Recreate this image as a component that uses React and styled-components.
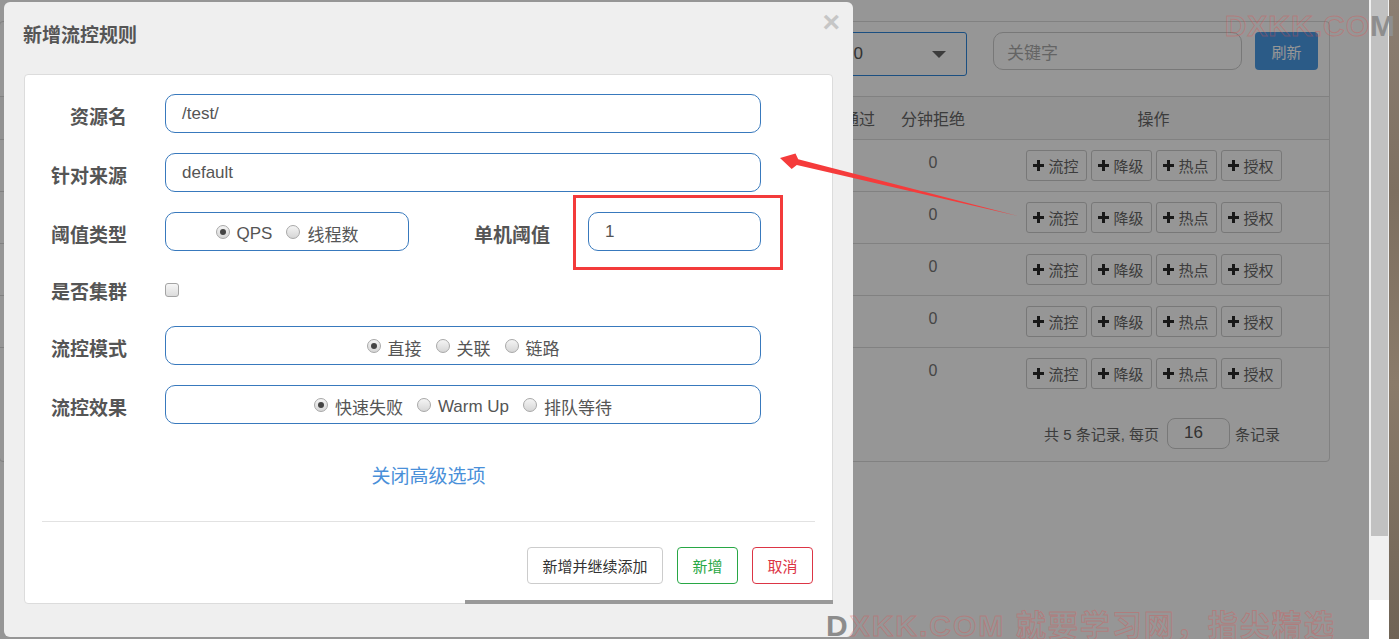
import React from 'react';
import styled, { createGlobalStyle } from 'styled-components';

const Global = createGlobalStyle`
  html, body {
    margin: 0;
    padding: 0;
    overflow: hidden;
    background: #fff;
  }
  * { box-sizing: border-box; }
  body {
    font-family: "Liberation Sans", "Noto Sans CJK SC", sans-serif;
    color: #555;
  }
`;

const Screen = styled.div`
  position: relative;
  display: flex;
  width: 1399px;
  height: 639px;
  overflow: hidden;
`;

const Viewport = styled.div`
  position: relative;
  width: 1369px;
  height: 639px;
  overflow: hidden;
  background: #fff;
`;

const Scrollbar = styled.div`
  width: 20px;
  height: 600px;
  background: #f0f0f0;
  padding: 0 1px 0 2px;
`;

const Thumb = styled.div`
  height: 536px;
  background: #c1c1c1;
`;

const Wallpaper = styled.div`
  width: 10px;
  height: 639px;
  background: linear-gradient(180deg, #8c7f73 0%, #7d6f60 30%, #8a7b6a 60%, #6f6355 100%);
`;

/* ---------- background page ---------- */

const Panel = styled.div`
  margin: 21px 0 0 -1px;
  width: 1331px;
  border: 1px solid #dcdcdc;
  border-radius: 4px;
  padding-bottom: 12px;
`;

const Toolbar = styled.div`
  display: flex;
  justify-content: flex-end;
  align-items: flex-start;
  padding: 10px 11px 20px 0;
`;

const Select = styled.div`
  width: 146px;
  height: 44px;
  border: 1px solid #2f86dc;
  border-radius: 3px;
  display: flex;
  align-items: center;
  justify-content: space-between;
  padding: 0 20px 0 22px;
  font-size: 17px;
  color: #555;
  margin-right: 26px;
`;

const Caret = styled.span`
  width: 0;
  height: 0;
  border-left: 7px solid transparent;
  border-right: 7px solid transparent;
  border-top: 7px solid #666;
`;

const Search = styled.div`
  width: 249px;
  height: 38px;
  border: 1px solid #ccc;
  border-radius: 10px;
  display: flex;
  align-items: center;
  padding-left: 13px;
  font-size: 17px;
  color: #aaa;
  margin-right: 13px;
`;

const PrimaryButton = styled.div`
  width: 63px;
  height: 38px;
  border-radius: 4px;
  background: #4a9be6;
  color: #fff;
  font-size: 15px;
  display: flex;
  align-items: center;
  justify-content: center;
`;

const TableRow = styled.div`
  display: grid;
  grid-template-columns: 414px 96px 96px 96px 96px 90px 90px 1fr;
  height: ${({ $header }) => ($header ? '44px' : '52px')};
  border-top: ${({ $header }) => ($header ? '1px solid #dcdcdc' : 'none')};
  border-bottom: ${({ $last }) => ($last ? 'none' : '1px solid #dcdcdc')};
  background: ${({ $header }) => ($header ? '#f8f8f8' : 'transparent')};
  font-size: 16px;
  color: #666;
`;

const HeadCell = styled.div`
  display: flex;
  align-items: center;
  justify-content: center;
`;

const Cell = styled.div`
  text-align: center;
  padding-top: 12px;
  line-height: 22px;
  color: #777;
  white-space: nowrap;
  overflow: hidden;
`;

const Ops = styled.div`
  display: flex;
  justify-content: center;
  gap: 4px;
  padding-top: 10px;
`;

const OpButton = styled.div`
  width: 61px;
  height: 31px;
  border: 1px solid #ccc;
  border-radius: 3px;
  background: #fff;
  display: flex;
  align-items: center;
  justify-content: center;
  gap: 4px;
  font-size: 15px;
  color: #666;
`;

const PlusIcon = () => (
  <svg width="11" height="11" viewBox="0 0 11 11">
    <path d="M4 0h3v4h4v3H7v4H4V7H0V4h4z" fill="#2a2a2a" />
  </svg>
);

const Pager = styled.div`
  display: flex;
  justify-content: flex-end;
  align-items: center;
  height: 32px;
  margin-top: 17px;
  padding-right: 49px;
  font-size: 15px;
  color: #666;
`;

const PageSize = styled.div`
  width: 63px;
  height: 31px;
  border: 1px solid #ccc;
  border-radius: 8px;
  margin: 0 5px 0 8px;
  padding-left: 16px;
  display: flex;
  align-items: center;
  font-size: 17px;
  color: #555;
`;

const Backdrop = styled.div`
  position: absolute;
  inset: 0;
  background: rgba(0, 0, 0, 0.412);
`;

/* ---------- modal ---------- */

const Modal = styled.div`
  position: absolute;
  left: 4px;
  top: 2px;
  width: 849px;
  height: 635px;
  background: #efefef;
  border-radius: 6px;
`;

const ModalHeader = styled.div`
  display: flex;
  justify-content: space-between;
  align-items: flex-start;
  padding: 20px 13px 0 19px;
  height: 72px;
`;

const ModalTitle = styled.h4`
  margin: 0;
  font-size: 19px;
  line-height: 27px;
  font-weight: bold;
  color: #555;
`;

const Close = styled.span`
  margin-top: -15px;
  font-size: 30px;
  line-height: 30px;
  font-weight: bold;
  color: #c6c6c6;
  font-family: "Liberation Sans", sans-serif;
`;

const Card = styled.div`
  position: relative;
  margin: 0 20px;
  height: 530px;
  background: #fff;
  border: 1px solid #dcdcdc;
  border-radius: 4px;
  padding-top: 19px;
`;

const Row = styled.div`
  display: flex;
  align-items: center;
  height: ${({ $h }) => $h || 39}px;
  margin-bottom: 20px;
`;

const Label = styled.label`
  width: ${({ $w }) => $w || 102}px;
  margin-right: 38px;
  padding-top: 4px;
  text-align: right;
  font-size: 19px;
  font-weight: bold;
  color: #555;
  white-space: nowrap;
`;

const Input = styled.div`
  width: ${({ $w }) => $w || 596}px;
  height: 39px;
  border: 1px solid #3879bd;
  border-radius: 10px;
  display: flex;
  align-items: center;
  justify-content: ${({ $center }) => ($center ? 'center' : 'flex-start')};
  padding-left: ${({ $center }) => ($center ? 0 : 16)}px;
  font-size: 17px;
  color: #555;
`;

const Option = styled.span`
  display: inline-flex;
  align-items: center;
  margin: 4px 7px 0;
  font-size: 17px;
  color: #555;
`;

const Radio = styled.span`
  position: relative;
  width: 14px;
  height: 14px;
  margin: -3px 7px 0 0;
  border-radius: 50%;
  border: 1px solid #a8a8a8;
  background: linear-gradient(180deg, #f4f4f4 0%, #d6d6d6 100%);

  &::after {
    content: '';
    display: ${({ $checked }) => ($checked ? 'block' : 'none')};
    position: absolute;
    left: 3px;
    top: 3px;
    width: 6px;
    height: 6px;
    border-radius: 50%;
    background: #444;
  }
`;

const Checkbox = styled.span`
  width: 14px;
  height: 14px;
  margin-top: 3px;
  border: 1px solid #a4a4a4;
  border-radius: 3px;
  background: linear-gradient(180deg, #f6f6f6 0%, #dcdcdc 100%);
`;

const Annotated = styled.div`
  position: relative;
`;

const RedBox = styled.div`
  position: absolute;
  left: -15px;
  top: -17px;
  width: 210px;
  height: 75px;
  border: 3px solid #f33b3b;
`;

const Toggle = styled.div`
  margin-top: 29px;
  height: 42px;
  display: flex;
  align-items: center;
  justify-content: center;
  font-size: 19px;
  color: #4a90d9;
`;

const Divider = styled.div`
  margin: 26px 17px 0;
  height: 1px;
  background: #e2e2e2;
`;

const Footer = styled.div`
  display: flex;
  justify-content: flex-end;
  gap: 14px;
  padding: 25px 19px 0 0;
`;

const Button = styled.div`
  height: 37px;
  padding: 0 14.5px;
  border: 1px solid ${({ $color }) => $color || '#ccc'};
  border-radius: 4px;
  background: #fff;
  display: flex;
  align-items: center;
  font-size: 15px;
  color: ${({ $color }) => $color || '#333'};
`;

const HScroll = styled.div`
  position: absolute;
  right: -1px;
  bottom: -1px;
  width: 368px;
  height: 4px;
  background: #999;
`;

const ArrowLayer = styled.svg`
  position: absolute;
  left: 0;
  top: 0;
  pointer-events: none;
`;

const WatermarkTop = styled.div`
  position: absolute;
  right: 3px;
  top: 9px;
  font-size: 30px;
  font-weight: bold;
  letter-spacing: 1px;
  color: transparent;
  -webkit-text-stroke: 1px rgba(225, 80, 80, 0.35);
  font-family: "Liberation Sans", sans-serif;
  white-space: nowrap;

  span { color: #8e8e8e; -webkit-text-stroke: 0; }
`;

const WatermarkBottom = styled.div`
  position: absolute;
  left: 826px;
  bottom: -6px;
  font-size: 30px;
  font-weight: bold;
  letter-spacing: 2px;
  color: transparent;
  -webkit-text-stroke: 1px rgba(225, 80, 80, 0.35);
  font-family: "Liberation Sans", "Noto Sans CJK SC", sans-serif;
  white-space: nowrap;

  span { color: #8c8c8c; -webkit-text-stroke: 0; }
`;

const ops = ['流控', '降级', '热点', '授权'];
const rows = [
  { name: '/test/', stats: [0, 0, 0, 0, 0, 0] },
  { name: 'sentinel_default_context', stats: [0, 0, 0, 0, 0, 0] },
  { name: '/hello', stats: [0, 0, 0, 0, 0, 0] },
  { name: '/demo', stats: [0, 0, 0, 0, 0, 0] },
  { name: 'sentinel_spring_web_context', stats: [0, 0, 0, 0, 0, 0] },
];

function Background() {
  return (
    <Panel>
      <Toolbar>
        <Select>
          10
          <Caret />
        </Select>
        <Search>关键字</Search>
        <PrimaryButton>刷新</PrimaryButton>
      </Toolbar>
      <TableRow $header>
        {['资源名', '通过QPS', '拒绝QPS', '并发数', '平均RT', '分钟通过', '分钟拒绝', '操作'].map((h) => (
          <HeadCell key={h}>{h}</HeadCell>
        ))}
      </TableRow>
      {rows.map((r, i) => (
        <TableRow key={i} $last={i === rows.length - 1}>
          <Cell>{r.name}</Cell>
          {r.stats.map((v, j) => (
            <Cell key={j}>{v}</Cell>
          ))}
          <Ops>
            {ops.map((o) => (
              <OpButton key={o}>
                <PlusIcon />
                {o}
              </OpButton>
            ))}
          </Ops>
        </TableRow>
      ))}
      <Pager>
        共 5 条记录, 每页
        <PageSize>16</PageSize>
        条记录
      </Pager>
    </Panel>
  );
}

function Choice({ checked, children }) {
  return (
    <Option>
      <Radio $checked={checked} />
      {children}
    </Option>
  );
}

function RuleDialog() {
  return (
    <Modal>
      <ModalHeader>
        <ModalTitle>新增流控规则</ModalTitle>
        <Close>×</Close>
      </ModalHeader>
      <Card>
        <Row>
          <Label>资源名</Label>
          <Input>/test/</Input>
        </Row>
        <Row>
          <Label>针对来源</Label>
          <Input>default</Input>
        </Row>
        <Row>
          <Label>阈值类型</Label>
          <Input $w={244} $center>
            <Choice checked>QPS</Choice>
            <Choice>线程数</Choice>
          </Input>
          <Label $w={141}>单机阈值</Label>
          <Annotated>
            <Input $w={173}>1</Input>
            <RedBox />
          </Annotated>
        </Row>
        <Row $h={35}>
          <Label>是否集群</Label>
          <Checkbox />
        </Row>
        <Row>
          <Label>流控模式</Label>
          <Input $center>
            <Choice checked>直接</Choice>
            <Choice>关联</Choice>
            <Choice>链路</Choice>
          </Input>
        </Row>
        <Row>
          <Label>流控效果</Label>
          <Input $center>
            <Choice checked>快速失败</Choice>
            <Choice>Warm Up</Choice>
            <Choice>排队等待</Choice>
          </Input>
        </Row>
        <Toggle>关闭高级选项</Toggle>
        <Divider />
        <Footer>
          <Button>新增并继续添加</Button>
          <Button $color="#28a745">新增</Button>
          <Button $color="#dc3545">取消</Button>
        </Footer>
        <HScroll />
      </Card>
    </Modal>
  );
}

export default function App() {
  return (
    <>
      <Global />
      <Screen>
        <Viewport>
          <Background />
          <Backdrop />
          <RuleDialog />
          <ArrowLayer width="1369" height="639" viewBox="0 0 1369 639">
            <polygon
              points="780,158 795.5,153.5 798.2,159.3 1022,217 796.8,165.1 791.7,169.1"
              fill="#f53b3b"
            />
          </ArrowLayer>
        </Viewport>
        <Scrollbar>
          <Thumb />
        </Scrollbar>
        <Wallpaper />
        <WatermarkTop>
          DXKK.CO<span>M</span>
        </WatermarkTop>
        <WatermarkBottom>
          <span>D</span>XKK.COM 就要学习网，指尖精选
        </WatermarkBottom>
      </Screen>
    </>
  );
}
